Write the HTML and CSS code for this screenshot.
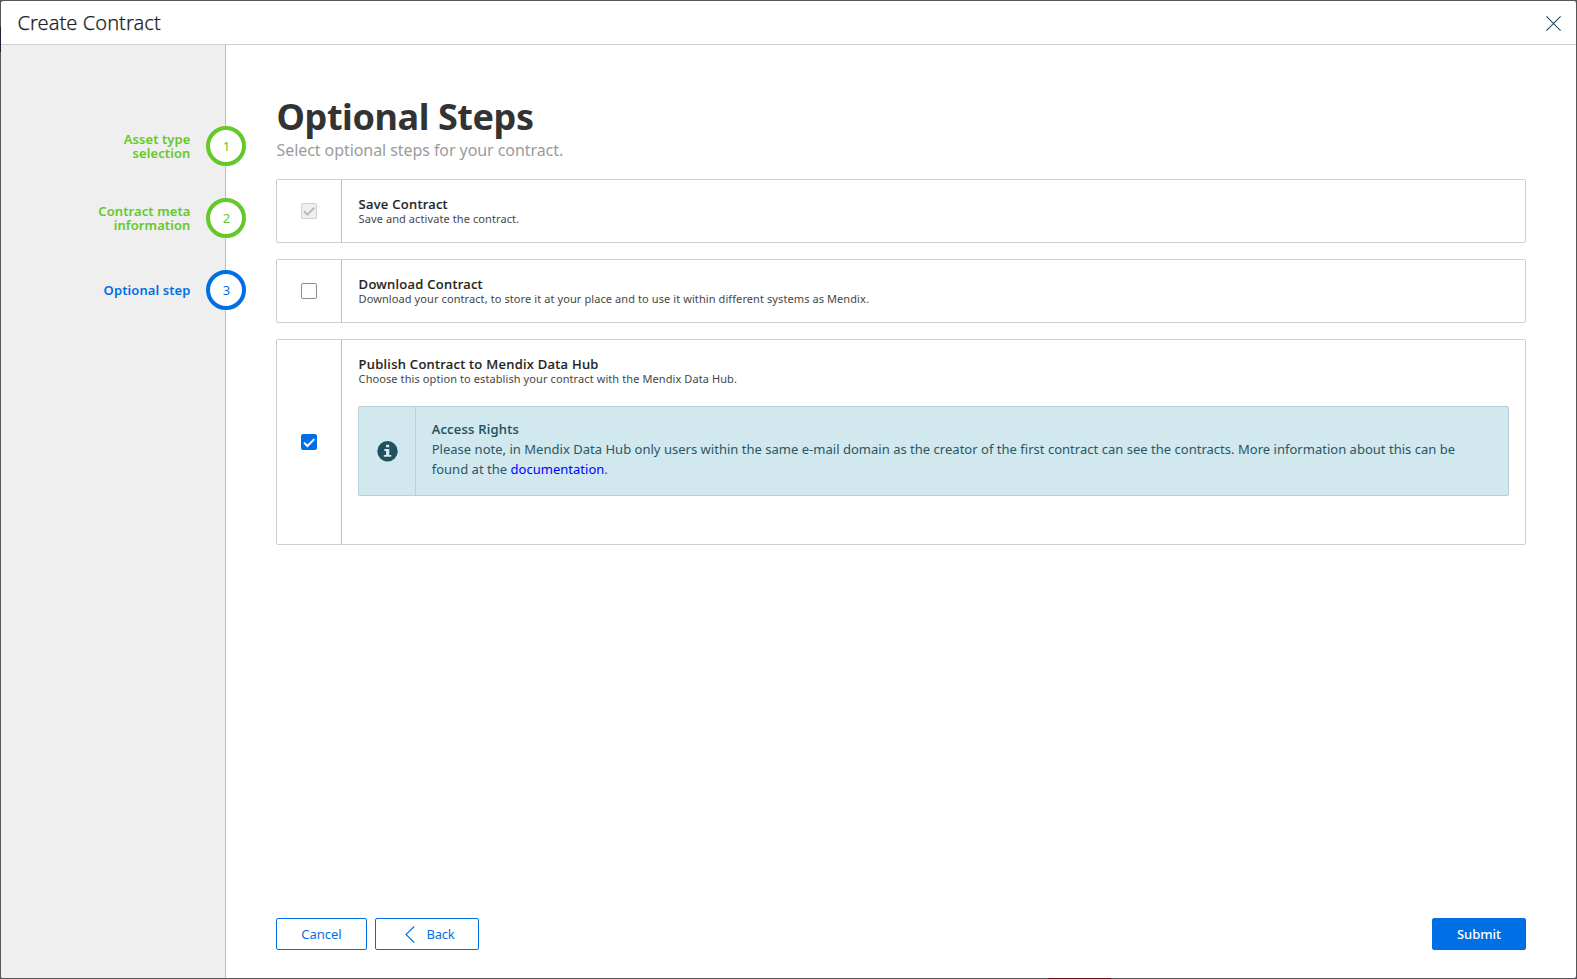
FILE: index.html
```
<!DOCTYPE html>
<html lang="en">
<head>
<meta charset="utf-8">
<title>Create Contract</title>
<link rel="stylesheet" href="styles.css">
</head>
<body>
<div class="backdrop">
  <div class="modal">
    <header class="modal-header">
      <span class="modal-title">Create Contract</span>
      <svg class="close" width="15" height="15" viewBox="0 0 15 15"><path d="M.4 .4 14.6 14.6M14.6 .4 .4 14.6" fill="none" stroke="#1e4b5a" stroke-width="1.05"/></svg>
    </header>
    <div class="modal-body">
      <nav class="sidebar">
        <div class="step done"><span class="step-label">Asset type<br>selection</span><span class="step-circle">1</span></div>
        <div class="step done"><span class="step-label">Contract meta<br>information</span><span class="step-circle">2</span></div>
        <div class="step active"><span class="step-label">Optional step</span><span class="step-circle">3</span></div>
      </nav>
      <main class="content">
        <h1 class="heading">Optional Steps</h1>
        <p class="subheading">Select optional steps for your contract.</p>
        <div class="cards">
          <section class="card">
            <div class="card-check"><span class="checkbox disabled"><svg width="14" height="14" viewBox="0 0 14 14"><path d="M2 7.3 5.4 10.7 12.3 3.8" fill="none" stroke="#b9b9b9" stroke-width="2"/></svg></span></div>
            <div class="card-text">
              <div class="card-title">Save Contract</div>
              <div class="card-desc">Save and activate the contract.</div>
            </div>
          </section>
          <section class="card">
            <div class="card-check"><span class="checkbox"></span></div>
            <div class="card-text">
              <div class="card-title">Download Contract</div>
              <div class="card-desc">Download your contract, to store it at your place and to use it within different systems as Mendix.</div>
            </div>
          </section>
          <section class="card">
            <div class="card-check"><span class="checkbox checked"><svg width="14" height="14" viewBox="0 0 14 14"><path d="M2 7.6 5.4 11 12.3 4.1" fill="none" stroke="#fff" stroke-width="2"/></svg></span></div>
            <div class="card-text publish">
              <div class="card-title">Publish Contract to Mendix Data Hub</div>
              <div class="card-desc">Choose this option to establish your contract with the Mendix Data Hub.</div>
              <div class="alert">
                <div class="alert-icon"><svg width="21" height="21" viewBox="0 0 21 21"><circle cx="10.5" cy="10.3" r="10.2" fill="#21505e"/><path d="M9 3.7h3.2v2.6H9zM7.3 8h5v5.9h2v1.9H6.8v-1.9H9V9.9H7.3z" fill="#d1e8ef"/></svg></div>
                <div class="alert-text">
                  <div class="alert-title">Access Rights</div>
                  <div>Please note, in Mendix Data Hub only users within the same e-mail domain as the creator of the first contract can see the contracts. More information about this can be<br>found at the <a class="link">documentation</a>.</div>
                </div>
              </div>
            </div>
          </section>
        </div>
        <footer class="actions">
          <button class="btn cancel">Cancel</button>
          <button class="btn back"><svg width="10" height="17" viewBox="0 0 10 17"><path d="M9.2 .5 1 8.5 9.2 16.5" fill="none" stroke="#006fe6" stroke-width="1.1"/></svg>Back</button>
          <button class="btn submit">Submit</button>
        </footer>
      </main>
    </div>
  </div>
</div>
</body>
</html>
```
FILE: styles.css
```
* { box-sizing: border-box; }
body { margin: 0; font-family: "Noto Sans", "Open Sans", sans-serif; font-size: 13px; color: #333; }
.backdrop {
  height: 979px;
  padding: 1px;
  background:
    linear-gradient(#6b1027, #6b1027) 1048px 978px / 63px 1px no-repeat,
    linear-gradient(#25203a, #25203a) 0 27px / 1px 25px no-repeat,
    #565558;
}
.modal { height: 977px; background: #fff; border-radius: 2px; overflow: hidden; display: flex; flex-direction: column; }
.modal-header { height: 44px; flex: none; padding: 0 15px 0 16.5px; display: flex; align-items: center; justify-content: space-between; border-bottom: 1px solid #cfcfcf; }
.modal-title { font-size: 20px; line-height: 28px; font-weight: 300; color: #1e1e1e; letter-spacing: .07px; -webkit-text-stroke: .25px #1e1e1e; }
.close { display: block; margin-top: 1px; }
.modal-body { flex: 1; display: flex; min-height: 0; }
.sidebar { width: 225px; flex: none; background: #efefef; border-right: 1px solid #bebebe; padding-top: 81px; display: flex; flex-direction: column; gap: 32px; }
.step { height: 40px; display: flex; align-items: center; justify-content: flex-end; gap: 15.5px; margin-right: -21px; font-weight: 600; line-height: 14px; text-align: right; letter-spacing: .09px; }
.step-circle { width: 40px; height: 40px; flex: none; border: 4px solid; border-radius: 50%; background: #fff; display: flex; align-items: center; justify-content: center; padding-left: 1px; font-weight: 400; line-height: 20px; letter-spacing: 0; }
.done { color: #64c828; }
.active { color: #006fe6; }
.content { flex: 1; min-width: 0; padding: 50px 50px 28px 50px; display: flex; flex-direction: column; }
.heading { margin: 2px 0 0 .5px; font-size: 36px; line-height: 40px; font-weight: 700; letter-spacing: -.42px; }
.subheading { margin: 2px 0 18px .5px; font-size: 16px; line-height: 22px; color: #9b9b9b; letter-spacing: -.07px; }
.cards { display: flex; flex-direction: column; gap: 16px; }
.card { border: 1px solid #cfcfcf; border-radius: 2px; display: flex; }
.card-check { width: 65px; flex: none; display: flex; align-items: center; justify-content: center; border-right: 1px solid #bebebe; }
.card-text { flex: 1; padding: 16px; }
.publish { padding-bottom: 48px; }
.checkbox { width: 16px; height: 16px; border: 1px solid #8c8c8c; border-radius: 2px; background: #fff; display: flex; }
.disabled { border-color: #cfcfcf; background: #efefef; }
.checked { border-color: #006fe6; background: #006fe6; }
.card-title { padding: 1px 0 0 .6px; line-height: 15px; font-weight: 500; color: #1e1e1e; letter-spacing: .28px; -webkit-text-stroke: .15px; }
.card-desc { padding-left: .6px; font-size: 11px; line-height: 15px; margin-top: -1px; color: #464646; letter-spacing: .09px; }
.alert { margin-top: 20px; height: 90px; display: flex; border: 1px solid #b8d0d8; border-radius: 2px; background: #d1e8ef; color: #2b5662; }
.alert-icon { width: 57px; flex: none; display: flex; align-items: center; justify-content: center; padding-left: 1px; border-right: 1px solid #b8d0d8; }
.alert-text { padding: 12px 0 0 15.7px; line-height: 20px; white-space: nowrap; letter-spacing: .018px; }
.alert-title { font-weight: 500; color: #21505e; letter-spacing: .26px; -webkit-text-stroke: .15px; }
.link { color: #00f; }
.actions { margin-top: auto; display: flex; gap: 8px; }
.btn { height: 32px; padding: 0; display: flex; align-items: center; justify-content: center; font: 400 13px/20px "Noto Sans", "Open Sans", sans-serif; color: #006fe6; background: #fff; border: 1px solid #006fe6; border-radius: 2px; }
.cancel { width: 91px; }
.back { width: 104px; padding-left: 5px; gap: 12px; letter-spacing: -.25px; }
.submit { width: 94px; margin-left: auto; color: #fff; background: #006fe6; font-weight: 500; }
```
